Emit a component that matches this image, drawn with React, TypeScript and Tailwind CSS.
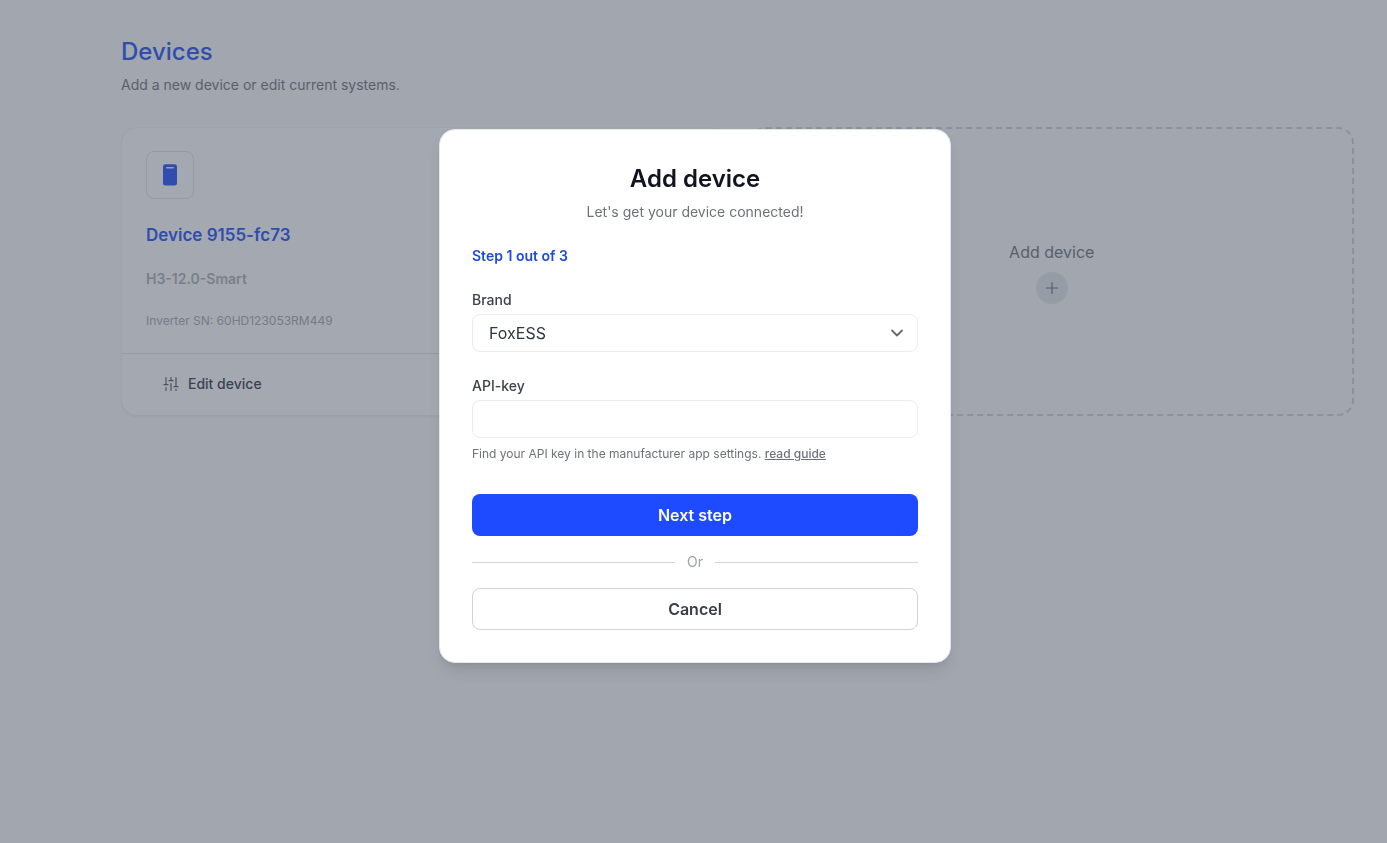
import React from 'react';

function PhoneIcon() {
  return (
    <svg width="16" height="22" viewBox="0 0 16 22" aria-hidden="true">
      <rect x="1" y="0.2" width="14" height="21.4" rx="2.4" fill="#2c57f6" />
      <rect x="4" y="3" width="8" height="1.4" rx="0.7" fill="#e8edff" />
    </svg>
  );
}

function SlidersIcon() {
  return (
    <svg className="text-[#60646c]" width="16" height="16" viewBox="0 0 16 16" fill="none" stroke="currentColor" strokeWidth="1.2" strokeLinecap="round" aria-hidden="true">
      <path d="M3 1.5v7M3 11.5v3M1 8.7h4" />
      <path d="M8 1.5v3M8 7.5v7M6 4.7h4" />
      <path d="M13 1.5v9M13 13.2v1.3M11 10.7h4" />
    </svg>
  );
}

function DeviceCard() {
  return (
    <article className="flex flex-col rounded-2xl border border-[#f1f2f3] bg-white shadow-xs">
      <div className="flex flex-col items-start px-6 pt-[23px] pb-6">
        <div className="flex size-12 items-center justify-center rounded-lg border border-[#e3e4e6]">
          <PhoneIcon />
        </div>
        <h2 className="mt-[22px] text-[17px] leading-7 font-semibold text-[#2c57f6]">Device 9155-fc73</h2>
        <p className="mt-5 text-sm font-semibold text-[#b0b3b8]">H3-12.0-Smart</p>
        <p className="mt-6 text-xs text-[#a9acb1]">Inverter SN: 60HD123053RM449</p>
      </div>
      <div className="grow border-t border-[#e3e4e6] px-[41px] py-5">
        <button type="button" className="flex items-center gap-[9px] text-sm font-medium text-[#3d4451]">
          <SlidersIcon />
          Edit device
        </button>
      </div>
    </article>
  );
}

function AddDeviceDialog() {
  return (
    <div className="fixed inset-0 flex items-start justify-center overflow-y-auto bg-gray-700/45 pt-[129px] pl-[3px]">
      <form
        role="dialog"
        aria-modal="true"
        aria-labelledby="dialog-title"
        onSubmit={(e) => e.preventDefault()}
        className="flex w-full max-w-lg flex-col rounded-2xl border border-gray-200 bg-white px-8 pt-[33px] pb-8 shadow-lg"
      >
        <h2 id="dialog-title" className="text-center text-2xl font-semibold text-[#12131f]">Add device</h2>
        <p className="mt-[7px] text-center text-sm text-[#6e7277]">Let's get your device connected!</p>
        <p className="mt-6 text-sm font-semibold text-[#1d4bdb]">Step 1 out of 3</p>

        <label htmlFor="brand" className="mt-6 text-sm font-medium text-[#3d4148]">Brand</label>
        <div className="relative mt-1">
          <select id="brand" className="h-[38px] w-full appearance-none rounded-lg border border-[#ececee] bg-white px-4 text-base text-[#2f3440]">
            <option>FoxESS</option>
          </select>
          <svg className="pointer-events-none absolute top-[9px] right-[11px] text-[#67696e]" width="20" height="20" viewBox="0 0 20 20" fill="none" stroke="currentColor" strokeWidth="1.8" strokeLinecap="round" strokeLinejoin="round" aria-hidden="true">
            <path d="M5 7.5l5 5 5-5" />
          </svg>
        </div>

        <label htmlFor="api-key" className="mt-6 text-sm font-medium text-[#3d4148]">API-key</label>
        <input id="api-key" type="text" className="mt-1 h-[38px] w-full rounded-lg border border-[#ececee] bg-white px-4 text-base text-[#2f3440]" />
        <p className="mt-2 text-xs text-[#6e7277]">
          Find your API key in the manufacturer app settings.{' '}
          <a href="#guide" className="font-medium underline">read guide</a>
        </p>

        <button type="submit" className="mt-8 h-[42px] rounded-lg bg-[#1e4bff] text-base font-semibold text-white">Next step</button>
        <div className="my-4 flex items-center gap-3 text-sm text-[#a0a3a8]">
          <span className="h-px grow bg-[#d0d2d5]" />
          Or
          <span className="h-px grow bg-[#d0d2d5]" />
        </div>
        <button type="button" className="h-[42px] rounded-lg border border-[#d0d2d5] bg-white text-base font-semibold text-[#383c46]">Cancel</button>
      </form>
    </div>
  );
}

export default function App() {
  return (
    <div className="min-h-screen bg-gray-50 font-['Inter',sans-serif]">
      <main className="pt-9 pr-[33px] pb-8 pl-[121px]">
        <h1 className="text-2xl font-medium text-[#2c57f6]">Devices</h1>
        <p className="mt-[7px] text-sm text-[#777b82]">Add a new device or edit current systems.</p>
        <div className="mt-8 grid grid-cols-2 gap-6">
          <DeviceCard />
          <button type="button" className="flex min-h-[289px] flex-col items-center justify-center gap-2 rounded-2xl border-2 border-dashed border-[#d4d6d9] text-base text-[#777b82]">
            Add device
            <span className="flex size-8 items-center justify-center rounded-full bg-[#e6e8ec] text-[#70748c]">
              <svg width="16" height="16" viewBox="0 0 16 16" fill="none" stroke="currentColor" strokeWidth="1.2" strokeLinecap="round" aria-hidden="true">
                <path d="M8 2.5v11M2.5 8h11" />
              </svg>
            </span>
          </button>
        </div>
      </main>
      <AddDeviceDialog />
    </div>
  );
}
